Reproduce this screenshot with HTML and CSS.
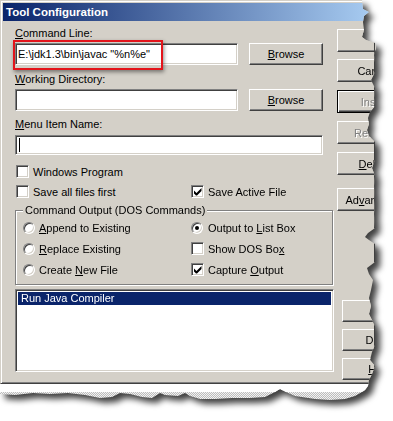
FILE: index.html
```html
<!DOCTYPE html>
<html>
<head>
<meta charset="utf-8">
<title>Tool Configuration</title>
<link rel="stylesheet" href="styles.css">
</head>
<body>
<div class="stage">
  <div class="piece">
    <div class="window">
      <div class="titlebar">Tool Configuration</div>
      <div class="client">
        <div class="main">
          <div class="label label-first"><u>C</u>ommand Line:</div>
          <div class="field-row">
            <div class="edit sunken edit-path">E:\jdk1.3\bin\javac "%n%e"</div>
            <div class="btn btn-browse"><span><u>B</u>rowse</span></div>
          </div>
          <div class="label label-gap"><u>W</u>orking Directory:</div>
          <div class="field-row">
            <div class="edit sunken edit-path"></div>
            <div class="btn btn-browse"><span><u>B</u>rowse</span></div>
          </div>
          <div class="label label-gap2"><u>M</u>enu Item Name:</div>
          <div class="edit sunken edit-wide"><span class="caret"></span></div>
          <div class="check-row row-first">
            <span class="checkbox sunken"></span><span>Windows Program</span>
          </div>
          <div class="check-grid">
            <div class="check-row"><span class="checkbox sunken"></span><span>Save all files first</span></div>
            <div class="check-row">
              <span class="checkbox sunken"><svg width="11" height="11" viewBox="0 0 11 11"><path d="M2 4.5v3l2 2h1l4.5-4.5V2L4.5 7z" fill="#000"/></svg></span>
              <span>Save Active File</span>
            </div>
          </div>
          <div class="group">
            <div class="group-title">Command Output (DOS Commands)</div>
            <div class="group-grid">
              <div class="opt"><span class="radio"></span><span><u>A</u>ppend to Existing</span></div>
              <div class="opt"><span class="radio"><span class="dot"></span></span><span class="opt-r">Output to <u>L</u>ist Box</span></div>
              <div class="opt"><span class="radio"></span><span><u>R</u>eplace Existing</span></div>
              <div class="opt"><span class="checkbox sunken"></span><span>Show DOS Bo<u>x</u></span></div>
              <div class="opt"><span class="radio"></span><span>Create <u>N</u>ew File</span></div>
              <div class="opt">
                <span class="checkbox sunken"><svg width="11" height="11" viewBox="0 0 11 11"><path d="M2 4.5v3l2 2h1l4.5-4.5V2L4.5 7z" fill="#000"/></svg></span>
                <span>Capture <u>O</u>utput</span>
              </div>
            </div>
          </div>
          <div class="listbox sunken">
            <div class="list-item selected">Run Java Compiler</div>
          </div>
        </div>
        <div class="side">
          <div class="btn btn-side b-ok"><span></span></div>
          <div class="btn btn-side b-cancel"><span>Cancel</span></div>
          <div class="btn btn-side btn-default b-insert"><span class="disabled">Insert</span></div>
          <div class="btn btn-side b-remove"><span class="disabled">Remove</span></div>
          <div class="btn btn-side b-delete"><span><u>D</u>elete</span></div>
          <div class="btn btn-side b-adv"><span>Ad<u>v</u>anced...</span></div>
          <div class="btn btn-low b-up"><span>Up</span></div>
          <div class="btn btn-low b-down"><span>Down</span></div>
          <div class="btn btn-low b-help"><span><u>H</u>elp</span></div>
        </div>
      </div>
      <div class="callout"></div>
    </div>
    <div class="below"></div>
  </div>
</div>
</body>
</html>
```
FILE: styles.css
```css
html, body {
  margin: 0;
  padding: 0;
  background: #fff;
  overflow: hidden;
}
body {
  font-family: "Liberation Sans", Arial, sans-serif;
  font-size: 11px;
  color: #000;
}
u { text-decoration: underline; text-underline-offset: 1px; }

.stage {
  width: 393px;
  height: 421px;
  filter: drop-shadow(5px 5px 3px rgba(0, 0, 0, 0.75));
}
.piece {
  width: 393px;
  height: 406px;
  overflow: hidden;
  clip-path: polygon(0 0, 362px 0, 363px 9px, 369px 12px, 364px 16px, 363px 22px, 364px 30px, 362px 37px, 366px 40px, 375px 43px, 376px 48px, 374px 55px, 375px 62px, 375px 72px, 371px 80px, 375px 88px, 374px 98px, 375px 106px, 370px 112px, 368px 118px, 369px 124px, 367px 130px, 369px 136px, 375px 142px, 375px 160px, 372px 168px, 375px 176px, 374px 186px, 375px 200px, 374px 214px, 375px 228px, 368px 233px, 365px 237px, 369px 240px, 375px 244px, 375px 262px, 367px 268px, 369px 274px, 373px 280px, 371px 290px, 369px 298px, 371px 306px, 369px 314px, 372px 320px, 375px 326px, 375px 345px, 372px 352px, 370px 360px, 375px 366px, 372px 374px, 369px 380px, 368px 386px, 365px 390px, 362px 392px, 355px 396px, 345px 399px, 330px 400px, 315px 399px, 295px 396px, 286px 392px, 280px 389px, 275px 392px, 265px 397px, 250px 398px, 232px 398px, 215px 399px, 200px 399px, 190px 396px, 185px 393px, 178px 396px, 165px 395px, 160px 393px, 152px 398px, 142px 397px, 130px 394px, 120px 393px, 112px 397px, 100px 398px, 85px 395px, 68px 393px, 50px 394px, 33px 393px, 15px 395px, 0 394px);
}

.window {
  position: relative;
  box-sizing: border-box;
  width: 420px;
  height: 384px;
  background: #D4D0C8;
  border: 1px solid;
  border-color: #D4D0C8 #404040 #404040 #D4D0C8;
  box-shadow: inset 1px 1px #fff, inset -1px -1px #808080;
  padding: 2px;
}
.window::after {
  content: "";
  position: absolute;
  left: 373px;
  top: 40px;
  bottom: 0;
  width: 1px;
  background: #404040;
}
.titlebar {
  height: 18px;
  line-height: 18px;
  padding-left: 3px;
  color: #fff;
  font-weight: bold;
  font-size: 11.5px;
  background: linear-gradient(90deg, #0A246A 0, #A6CAF0 365px);
}
.client { display: flex; }
.main { margin-left: 12px; width: 320px; }
.side { margin-left: 2px; display: flex; flex-direction: column; }

.label { height: 13px; line-height: 13px; white-space: nowrap; }
.label-first { margin-top: 6px; }
.label-gap { margin-top: 8px; }
.label-gap2 { margin-top: 7px; }

.sunken {
  box-sizing: border-box;
  border: 1px solid;
  border-color: #808080 #fff #fff #808080;
  box-shadow: inset 1px 1px #404040, inset -1px -1px #D4D0C8;
  background: #fff;
}
.field-row { display: flex; margin-top: 3px; height: 22px; }
.edit { height: 22px; line-height: 20px; padding-left: 2px; white-space: nowrap; }
.edit-path { width: 223px; }
.edit-wide { width: 308px; height: 20px; margin-top: 4px; display: flex; align-items: center; padding-left: 2px; }
.caret { width: 1px; height: 14px; background: #000; margin-left: 1px; }

.btn {
  box-sizing: border-box;
  border: 1px solid;
  border-color: #fff #404040 #404040 #fff;
  box-shadow: inset -1px -1px #808080;
  background: #D4D0C8;
  display: flex;
  align-items: center;
  justify-content: center;
  white-space: nowrap;
}
.btn-browse { margin-left: 11px; width: 74px; height: 22px; }
.btn-side { width: 75px; height: 23px; }
.btn-low { width: 75px; height: 22px; margin-left: 5px; margin-top: 7px; }
.btn-default {
  border-color: #000;
  box-shadow: inset 1px 1px #fff, inset -1px -1px #404040, inset -2px -2px #808080;
}
.disabled { color: #808080; text-shadow: 1px 1px #fff; }
.b-ok { margin-top: 8px; }
.b-cancel { margin-top: 7px; }
.b-insert { margin-top: 8px; }
.b-remove { margin-top: 8px; }
.b-delete { margin-top: 8px; }
.b-adv { margin-top: 13px; }
.b-up { margin-top: 89px; }

.check-row { display: flex; align-items: center; gap: 4px; height: 13px; white-space: nowrap; }
.row-first { margin-top: 10px; padding-left: 1px; }
.check-grid {
  display: grid;
  grid-template-columns: 175px 1fr;
  margin-top: 7px;
  padding-left: 1px;
}
.checkbox {
  width: 13px;
  height: 13px;
  flex: none;
  display: flex;
  align-items: center;
  justify-content: center;
}
.checkbox svg { display: block; }

.group {
  box-sizing: border-box;
  margin-top: 12px;
  width: 318px;
  height: 75px;
  border: 1px solid #808080;
  box-shadow: inset 1px 1px #fff, 1px 1px #fff;
}
.group-title {
  width: fit-content;
  margin: -7px 0 0 7px;
  padding: 0 2px;
  line-height: 13px;
  height: 13px;
  background: #D4D0C8;
  white-space: nowrap;
}
.group-grid {
  display: grid;
  grid-template-columns: 168px 1fr;
  grid-auto-rows: 21px;
  padding-left: 7px;
}
.opt { display: flex; align-items: center; gap: 4px; white-space: nowrap; }
.opt-r { margin-left: 1px; }
.radio {
  box-sizing: border-box;
  width: 12px;
  height: 12px;
  flex: none;
  border-radius: 50%;
  border: 1px solid;
  border-color: #808080 #fff #fff #808080;
  box-shadow: inset 1px 1px #404040, inset -1px -1px #D4D0C8;
  background: #fff;
  display: flex;
  align-items: center;
  justify-content: center;
}
.dot { width: 4px; height: 4px; border-radius: 50%; background: #000; }

.listbox {
  margin-top: 4px;
  width: 319px;
  height: 83px;
  padding: 2px;
}
.list-item { height: 13px; line-height: 13px; padding-left: 3px; white-space: nowrap; }
.selected { background: #0A246A; color: #fff; }

.callout {
  position: absolute;
  left: 12px;
  top: 39px;
  width: 150px;
  height: 30px;
  box-sizing: border-box;
  border: 2px solid #E3141B;
  box-shadow: 1px 2px 4px rgba(0, 0, 0, 0.45);
}

.below {
  height: 22px;
  background:
    linear-gradient(#fff, #fff) top left / 100% 8px no-repeat,
    repeating-conic-gradient(#bdbdbd 0 25%, #f2f2f2 0 50%) 0 0 / 2px 2px;
}
```
